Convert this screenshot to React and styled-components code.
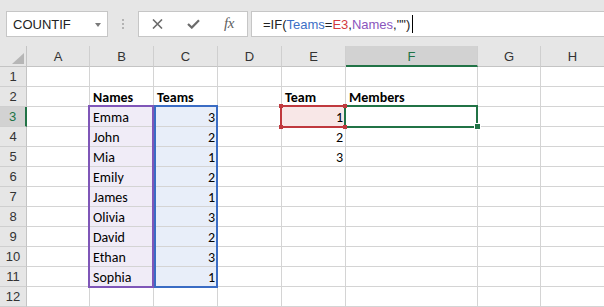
import React from "react";
import styled, { createGlobalStyle } from "styled-components";

const GlobalStyle = createGlobalStyle`
  html, body { margin: 0; padding: 0; background: #fff; overflow: hidden; }
  * { box-sizing: border-box; }
`;

const GREEN = "#217346";
const GRID = "#d4d4d4";
const HEAD_BG = "#e6e6e6";
const HEAD_SEL = "#d2d2d2";

const Page = styled.div`
  width: 604px;
  height: 307px;
  overflow: hidden;
  background: #fff;
`;

const Toolbar = styled.div`
  height: 46px;
  background: ${HEAD_BG};
  display: flex;
  align-items: flex-start;
  padding: 11px 0 0 6px;
  font-family: "Liberation Sans", Arial, sans-serif;
`;

const Box = styled.div`
  height: 26px;
  background: #fff;
  border: 1px solid #c6c6c6;
  display: flex;
  align-items: center;
`;

const NameBox = styled(Box)`
  width: 102px;
  justify-content: space-between;
  padding: 0 6px;
  font-size: 13px;
  color: #222;
`;

const Caret = styled.span`
  width: 0;
  height: 0;
  border-left: 3.5px solid transparent;
  border-right: 3.5px solid transparent;
  border-top: 4px solid #7a7a7a;
  margin-top: 1px;
`;

const Grip = styled.div`
  width: 30px;
  height: 26px;
  display: flex;
  flex-direction: column;
  align-items: center;
  justify-content: center;
  gap: 2px;
`;

const Dot = styled.span`
  width: 2px;
  height: 2px;
  background: #b3b3b3;
`;

const FnBox = styled(Box)`
  width: 110px;
  margin-right: 3px;
`;

const FnSlot = styled.div`
  width: 36px;
  height: 100%;
  display: flex;
  align-items: center;
  justify-content: center;
  color: #6b6b6b;
`;

const Fx = styled.span`
  font-family: "Liberation Serif", "Times New Roman", serif;
  font-style: italic;
  font-size: 15px;
  color: #606060;
  letter-spacing: -0.5px;
  margin-top: -2px;
`;

const FormulaBox = styled(Box)`
  flex: 1;
  border-right: none;
  padding-left: 11px;
  font-size: 13px;
  color: #222;
  white-space: pre;
`;

const Tok = styled.span`
  color: ${(p) => p.$c || "#222"};
`;

const Cursor = styled.span`
  display: inline-block;
  width: 1px;
  height: 18px;
  background: #000;
  margin-left: 2px;
`;

const Sheet = styled.div`
  position: relative;
  display: grid;
  grid-template-columns: 27px 63px 64px 64px 64px 64px 132px 63px 64px;
  grid-template-rows: 21px repeat(12, 20px);
`;

const ColHead = styled.div`
  background: ${(p) => (p.$sel ? HEAD_SEL : HEAD_BG)};
  border-right: 1px solid #cfcfcf;
  border-bottom: ${(p) => (p.$sel ? `2px solid ${GREEN}` : "1px solid #c4c4c4")};
  display: flex;
  align-items: center;
  justify-content: center;
  font-family: "Liberation Sans", Arial, sans-serif;
  font-size: 13px;
  color: ${(p) => (p.$sel ? GREEN : "#333")};
  padding-top: ${(p) => (p.$sel ? "1px" : "0")};
`;

const Corner = styled.div`
  background: ${HEAD_BG};
  border-right: 1px solid #c4c4c4;
  border-bottom: 1px solid #c4c4c4;
  display: flex;
  align-items: flex-end;
  justify-content: flex-end;
  padding: 0 2px 2px 0;
`;

const RowHead = styled.div`
  background: ${(p) => (p.$sel ? HEAD_SEL : HEAD_BG)};
  border-right: ${(p) => (p.$sel ? `2px solid ${GREEN}` : "1px solid #c4c4c4")};
  border-bottom: 1px solid #cfcfcf;
  display: flex;
  align-items: center;
  justify-content: center;
  font-family: "Liberation Sans", Arial, sans-serif;
  font-size: 13px;
  color: ${(p) => (p.$sel ? GREEN : "#333")};
`;

const Cell = styled.div`
  background: ${(p) => p.$fill || "#fff"};
  border-right: 1px solid ${GRID};
  border-bottom: 1px solid ${GRID};
  display: flex;
  align-items: center;
  justify-content: ${(p) => (p.$num ? "flex-end" : "flex-start")};
  padding: 1px 2px 0 3px;
  font-family: Carlito, Lato, "Liberation Sans", sans-serif;
  font-size: 14px;
  font-weight: ${(p) => (p.$bold ? 700 : 400)};
  color: #000;
  white-space: nowrap;
  overflow: hidden;
`;

const Range = styled.div`
  position: absolute;
  grid-row: ${(p) => p.$rows};
  grid-column: ${(p) => p.$cols};
  top: -2px;
  bottom: -1px;
  left: ${(p) => (p.$l != null ? p.$l : -2)}px;
  right: 0;
  border: 2px solid ${(p) => p.$color};
  pointer-events: none;
`;

const Knob = styled.span`
  position: absolute;
  z-index: 1;
  width: 4px;
  height: 4px;
  background: #c0393e;
  ${(p) => (p.$v === "t" ? "top: -3px;" : "bottom: -3px;")}
  ${(p) => (p.$h === "l" ? "left: -3px;" : "right: -3px;")}
`;

const Handle = styled.span`
  position: absolute;
  z-index: 1;
  right: -5px;
  bottom: -4px;
  width: 7px;
  height: 7px;
  background: ${GREEN};
  border: 1px solid #fff;
`;

const names = ["Emma", "John", "Mia", "Emily", "James", "Olivia", "David", "Ethan", "Sophia"];
const teams = [3, 2, 1, 2, 1, 3, 2, 3, 1];
const letters = ["A", "B", "C", "D", "E", "F", "G", "H"];

const PURPLE_FILL = "#f0ecf7";
const BLUE_FILL = "#e8eef9";
const RED_FILL = "#f8e7e7";

function cellFor(r, c) {
  // r: 1..12, c: 0..7 (A..H)
  const col = letters[c];
  if (r === 2) {
    const hdr = { B: "Names", C: "Teams", E: "Team", F: "Members" }[col];
    if (hdr) return { text: hdr, bold: true };
  }
  if (r >= 3 && r <= 11) {
    if (col === "B") return { text: names[r - 3], fill: PURPLE_FILL };
    if (col === "C") return { text: teams[r - 3], num: true, fill: BLUE_FILL };
  }
  if (col === "E" && r >= 3 && r <= 5) {
    return { text: r - 2, num: true, fill: r === 3 ? RED_FILL : undefined };
  }
  return { text: "" };
}

function XIcon() {
  return (
    <svg width="11" height="10" viewBox="0 0 11 10">
      <path d="M1 0.5 L10 9.5 M10 0.5 L1 9.5" stroke="#6b6b6b" strokeWidth="1.6" fill="none" />
    </svg>
  );
}

function CheckIcon() {
  return (
    <svg width="13" height="10" viewBox="0 0 13 10">
      <path d="M1 5 L4.8 8.6 L12 1.2" stroke="#6b6b6b" strokeWidth="2.2" fill="none" />
    </svg>
  );
}

export default function App() {
  const rows = [];
  for (let r = 1; r <= 12; r++) {
    rows.push(
      <RowHead key={`rh${r}`} $sel={r === 3}>
        {r}
      </RowHead>
    );
    for (let c = 0; c < 8; c++) {
      const d = cellFor(r, c);
      rows.push(
        <Cell key={`c${r}-${c}`} $bold={d.bold} $num={d.num} $fill={d.fill}>
          {d.text}
        </Cell>
      );
    }
  }

  return (
    <Page>
      <GlobalStyle />
      <Toolbar>
        <NameBox>
          <span>COUNTIF</span>
          <Caret />
        </NameBox>
        <Grip>
          <Dot />
          <Dot />
          <Dot />
        </Grip>
        <FnBox>
          <FnSlot>
            <XIcon />
          </FnSlot>
          <FnSlot>
            <CheckIcon />
          </FnSlot>
          <FnSlot>
            <Fx>fx</Fx>
          </FnSlot>
        </FnBox>
        <FormulaBox>
          <Tok>=IF(</Tok>
          <Tok $c="#3c6fc6">Teams</Tok>
          <Tok>=</Tok>
          <Tok $c="#d3393d">E3</Tok>
          <Tok>,</Tok>
          <Tok $c="#8a56bd">Names</Tok>
          <Tok>,"")</Tok>
          <Cursor />
        </FormulaBox>
      </Toolbar>
      <Sheet>
        <Corner>
          <svg width="12" height="11" viewBox="0 0 12 11">
            <path d="M12 0 L12 11 L0 11 Z" fill="#b6b6b6" />
          </svg>
        </Corner>
        {letters.map((l) => (
          <ColHead key={l} $sel={l === "F"}>
            {l}
          </ColHead>
        ))}
        {rows}
        <Range $rows="4 / 13" $cols="3 / 4" $color="#7f56b8" />
        <Range $rows="4 / 13" $cols="4 / 5" $color="#3a6cc4" $l={0} />
        <Range $rows="4 / 5" $cols="6 / 7" $color="#c0393e">
          <Knob $v="t" $h="l" />
          <Knob $v="t" $h="r" />
          <Knob $v="b" $h="l" />
          <Knob $v="b" $h="r" />
        </Range>
        <Range $rows="4 / 5" $cols="7 / 8" $color={GREEN}>
          <Handle />
        </Range>
      </Sheet>
    </Page>
  );
}
